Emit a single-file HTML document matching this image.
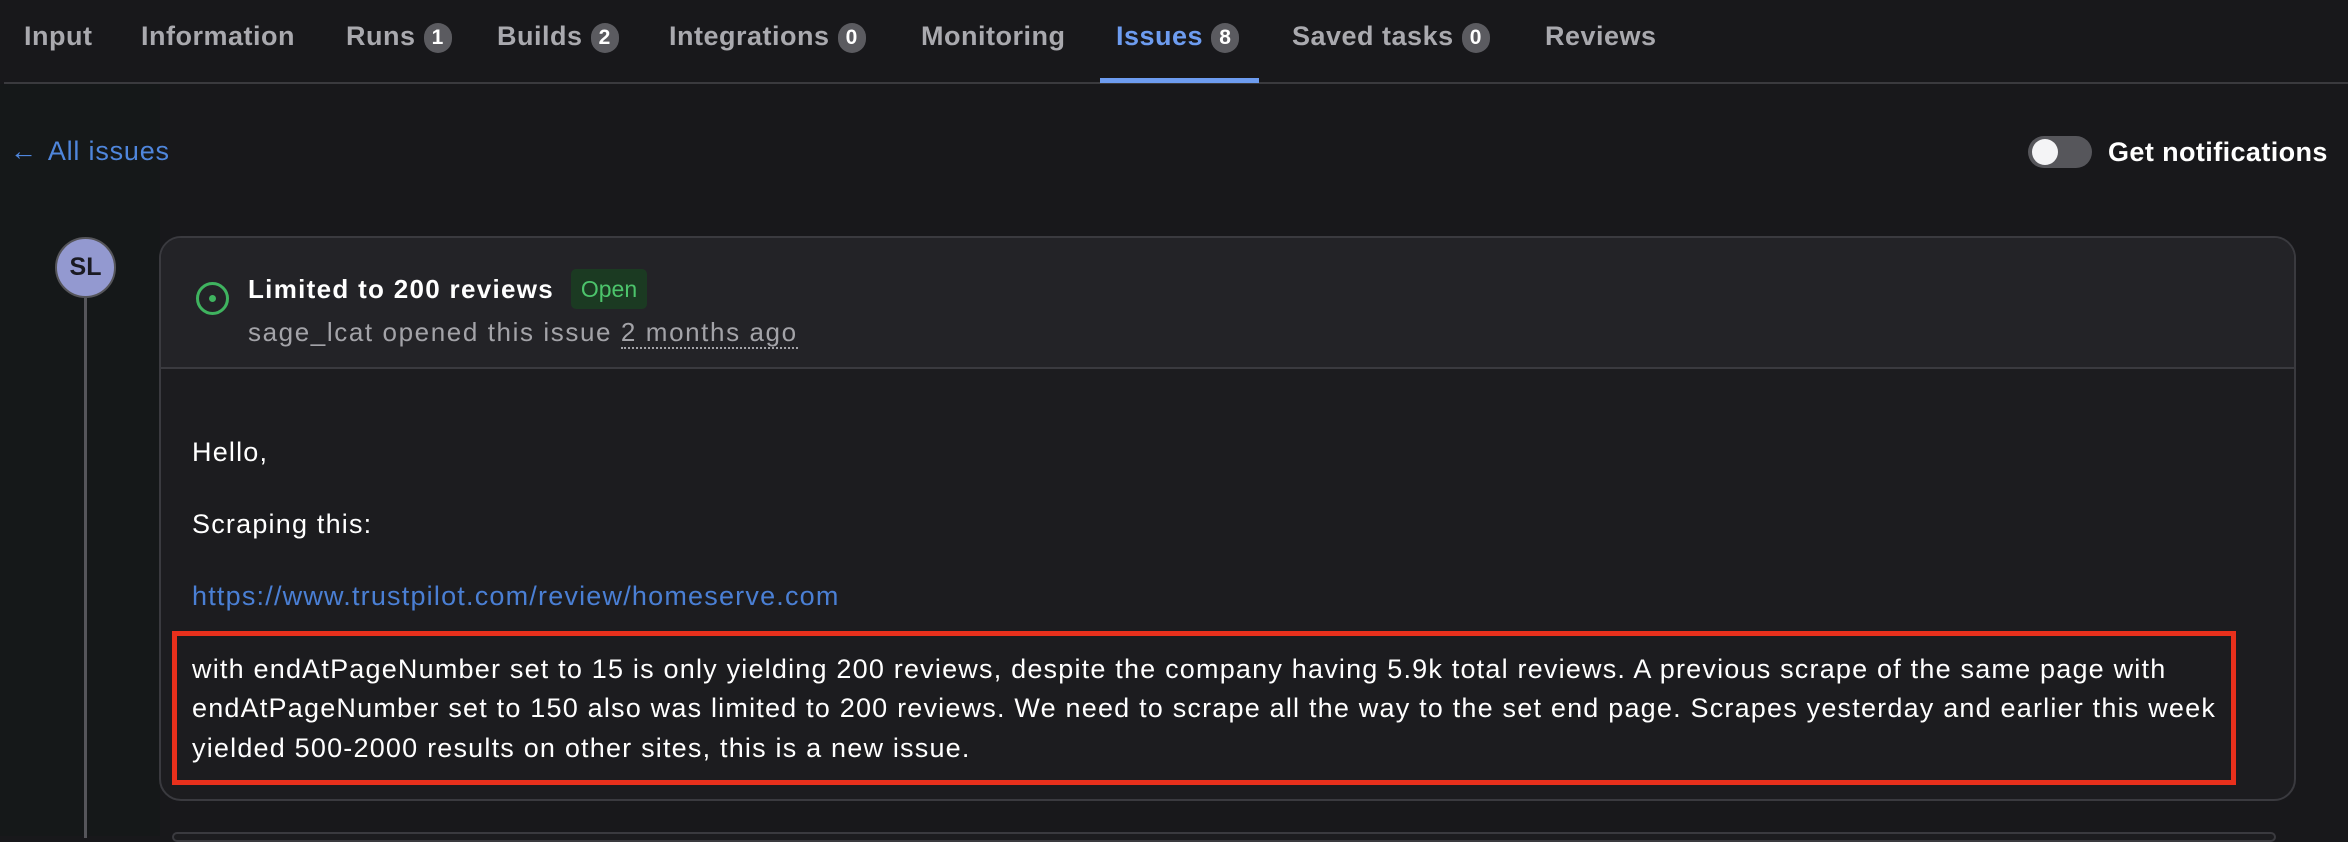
<!DOCTYPE html>
<html><head><meta charset="utf-8"><style>
*{margin:0;padding:0;box-sizing:border-box}
body{width:2348px;height:836px;overflow:hidden;background:#18181b;font-family:"Liberation Sans",sans-serif;position:relative;color:#fff}
.a{position:absolute;white-space:nowrap}
.tab{position:absolute;top:18px;font-size:27px;font-weight:bold;color:#a9a9ae;line-height:36px;letter-spacing:0.5px}
.b{display:inline-block;width:28px;height:30px;border-radius:14px;background:#5b5b60;color:#fff;font-size:21px;line-height:30px;text-align:center;vertical-align:1px;margin-left:8px;letter-spacing:0}
.t{font-size:27px;line-height:39.5px;color:#fff;letter-spacing:1.2px}
</style></head><body>
<div class="a" style="left:0;top:84px;width:160px;height:752px;background:#151819"></div>
<div class="tab" style="left:24px">Input</div>
<div class="tab" style="left:141px">Information</div>
<div class="tab" style="left:346px">Runs<span class="b">1</span></div>
<div class="tab" style="left:497px">Builds<span class="b">2</span></div>
<div class="tab" style="left:669px">Integrations<span class="b">0</span></div>
<div class="tab" style="left:921px">Monitoring</div>
<div class="tab" style="left:1116px;color:#6d9cf0">Issues<span class="b">8</span></div>
<div class="tab" style="left:1292px">Saved tasks<span class="b">0</span></div>
<div class="tab" style="left:1545px">Reviews</div>
<div class="a" style="left:4px;top:82px;width:2344px;height:2px;background:#3a3a3e"></div>
<div class="a" style="left:1100px;top:78px;width:159px;height:5px;background:#6d9cf0"></div>

<div class="a" style="left:10px;top:136px;font-size:27px;line-height:30px;color:#4f86dc;letter-spacing:0.8px"><span style="margin-right:10px">&#8592;</span>All issues</div>

<div class="a" style="left:2028px;top:136px;width:64px;height:32px;border-radius:16px;background:#56565b"></div>
<div class="a" style="left:2032px;top:139px;width:26px;height:26px;border-radius:13px;background:#f4f4f6"></div>
<div class="a" style="left:2108px;top:136px;font-size:27px;line-height:32px;font-weight:bold;color:#fff;letter-spacing:0.4px">Get notifications</div>

<div class="a" style="left:84px;top:298px;width:3px;height:540px;background:#55555a"></div>
<div class="a" style="left:55px;top:237px;width:61px;height:61px;border-radius:50%;background:#9399d0;border:2px solid #55555a;color:#1a1a22;font-size:25px;font-weight:bold;text-align:center;line-height:57px">SL</div>

<div class="a" style="left:159px;top:236px;width:2137px;height:565px;border:2px solid #3a3a3f;border-radius:22px;background:#1c1c1f;overflow:hidden">
 <div style="height:131px;background:#232327;border-bottom:2px solid #3a3a3f"></div>
</div>
<div class="a" style="left:196px;top:282px;width:33px;height:33px;border-radius:50%;border:3px solid #3fb35f"></div>
<div class="a" style="left:209px;top:295px;width:7px;height:7px;border-radius:50%;background:#3fb35f"></div>
<div class="a" style="left:248px;top:273px;font-size:26px;font-weight:bold;line-height:32px;color:#fff;letter-spacing:1.3px">Limited to 200 reviews</div>
<div class="a" style="left:571px;top:269px;width:76px;height:40px;border-radius:5px;background:#1b3a22;color:#4cc46b;font-size:23px;line-height:40px;text-align:center">Open</div>
<div class="a" style="left:248px;top:316px;font-size:26px;line-height:32px;color:#a3a3a8;letter-spacing:1.6px">sage_lcat opened this issue <span style="border-bottom:2px dotted #a3a3a8">2 months ago</span></div>

<div class="a t" style="left:192px;top:433px">Hello,</div>
<div class="a t" style="left:192px;top:505px">Scraping this:</div>
<div class="a t" style="left:192px;top:577px;color:#4a7fd4">https://www.trustpilot.com/review/homeserve.com</div>

<div class="a" style="left:172px;top:631px;width:2064px;height:154px;border:5px solid #e8301c"></div>
<div class="a t" style="left:192px;top:650px">with endAtPageNumber set to 15 is only yielding 200 reviews, despite the company having 5.9k total reviews. A previous scrape of the same page with</div>
<div class="a t" style="left:192px;top:689px">endAtPageNumber set to 150 also was limited to 200 reviews. We need to scrape all the way to the set end page. Scrapes yesterday and earlier this week</div>
<div class="a t" style="left:192px;top:729px">yielded 500-2000 results on other sites, this is a new issue.</div>

<div class="a" style="left:172px;top:832px;width:2104px;height:10px;border:2px solid #3a3a3f;border-radius:12px;background:#1c1c1f"></div>
</body></html>
